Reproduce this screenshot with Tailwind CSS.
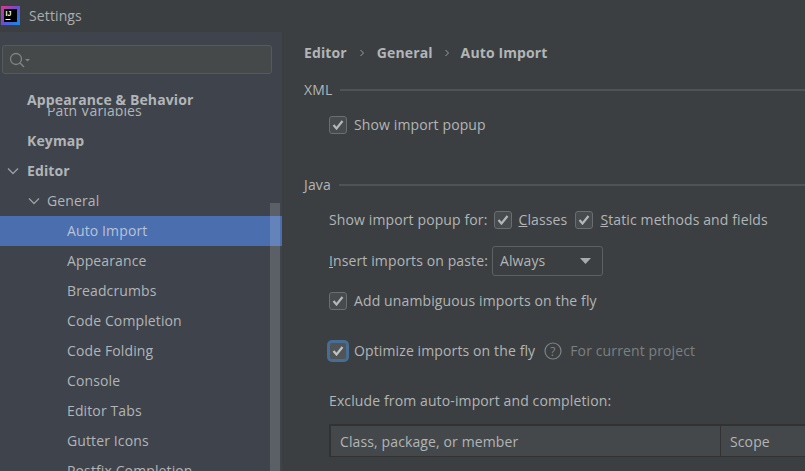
<!DOCTYPE html>
<html lang="en">
<head>
  <meta charset="UTF-8" />
  <title>Settings</title>
  <script src="https://cdn.jsdelivr.net/npm/@tailwindcss/browser@4"></script>
</head>
<body class="w-[805px] h-[471px] overflow-hidden bg-[#3c3f41] text-[#b1b5b7] text-[14px] tracking-[0.12px] font-['Open_Sans',sans-serif]">
  <!-- title bar -->
  <div class="h-[32px] flex items-center">
    <svg width="19" height="19" viewBox="0 0 19 19" class="ml-[1px] mt-[-2px]">
      <defs>
        <linearGradient id="logo" x1="0" y1="0" x2="1" y2="1">
          <stop offset="0" stop-color="#e0338f" />
          <stop offset="0.5" stop-color="#6a4fd0" />
          <stop offset="1" stop-color="#0a8ff0" />
        </linearGradient>
      </defs>
      <rect width="19" height="19" fill="url(#logo)" />
      <rect x="3" y="3" width="13" height="13" fill="#000" />
      <text x="4.500" y="10" font-size="7" font-weight="700" fill="#fff" font-family="'Liberation Sans',sans-serif">IJ</text>
      <path d="M4.500 13.500h5" stroke="#fff" stroke-width="1" />
    </svg>
    <span class="ml-[9px] mt-[-1px] text-[#a9adaf]">Settings</span>
  </div>

  <div class="flex h-[439px]">
    <!-- sidebar -->
    <aside class="w-[282px] shrink-0 bg-[#3f434c] flex flex-col">
      <div class="h-[53px] pl-[2px] pt-[13px]">
        <div class="w-[270px] h-[29px] bg-[#45494a] border border-[#575a5c] rounded-[3px] flex items-center pl-[5px]">
          <svg width="22" height="18" viewBox="0 0 22 18" fill="none">
            <circle cx="8" cy="8" r="5.500" stroke="#7f8487" stroke-width="1.300" />
            <path d="M12 12l4 4" stroke="#7f8487" stroke-width="1.500" />
            <path d="M17 8h5l-2.500 2.500z" fill="#7f8487" />
          </svg>
        </div>
      </div>
      <div class="relative flex-1 overflow-hidden">
        <div class="absolute top-0 left-0 w-full h-[23px] z-10 bg-[#3f434c] pl-[27px] font-bold leading-[30px]">Appearance &amp; Behavior</div>
        <div class="absolute right-[2px] top-[118px] bottom-0 w-[10px] z-20 bg-white/15"></div>
        <div class="leading-[30px] mt-[11px]">
          <div class="h-[30px] pl-[47px]">Path Variables</div>
          <div class="h-[30px] pl-[27px] font-bold">Keymap</div>
          <div class="h-[30px] pl-[7px] font-bold flex items-center gap-[8px]">
            <svg width="12" height="8" viewBox="0 0 12 8" fill="none"><path d="M1 1.500l5 5 5-5" stroke="#9a9ea1" stroke-width="1.400" /></svg>
            <span>Editor</span>
          </div>
          <div class="h-[30px] pl-[28px] flex items-center gap-[7px]">
            <svg width="12" height="8" viewBox="0 0 12 8" fill="none"><path d="M1 1.500l5 5 5-5" stroke="#9a9ea1" stroke-width="1.400" /></svg>
            <span>General</span>
          </div>
          <div class="h-[30px] pl-[67px] bg-[#4b6eaf] text-[#b7c3d6]">Auto Import</div>
          <div class="h-[30px] pl-[67px]">Appearance</div>
          <div class="h-[30px] pl-[67px]">Breadcrumbs</div>
          <div class="h-[30px] pl-[67px]">Code Completion</div>
          <div class="h-[30px] pl-[67px]">Code Folding</div>
          <div class="h-[30px] pl-[67px]">Console</div>
          <div class="h-[30px] pl-[67px]">Editor Tabs</div>
          <div class="h-[30px] pl-[67px]">Gutter Icons</div>
          <div class="h-[30px] pl-[67px]">Postfix Completion</div>
        </div>
      </div>
    </aside>

    <!-- main panel -->
    <main class="flex-1 min-w-0 overflow-hidden pl-[22px] leading-[20px]">
      <div class="flex items-center h-[20px] mt-[11px] font-bold">
        <span>Editor</span>
        <svg width="6" height="8" viewBox="0 0 6 8" fill="none" class="mx-[12px]"><path d="M1.500 1l3 3-3 3" stroke="#9a9ea1" /></svg>
        <span>General</span>
        <svg width="6" height="8" viewBox="0 0 6 8" fill="none" class="mx-[11px]"><path d="M1.500 1l3 3-3 3" stroke="#9a9ea1" /></svg>
        <span>Auto Import</span>
      </div>

      <div class="flex items-center gap-[8px] mt-[17px]">
        <span>XML</span><div class="flex-1 h-[2px] bg-[#505254]"></div>
      </div>
      <label class="flex items-center gap-[7px] ml-[25px] mt-[15px]">
        <span class="w-[18px] h-[18px] rounded-[3px] border border-[#6b6e70] bg-[#474b4d] flex items-center justify-center">
          <svg width="12" height="10" viewBox="0 0 12 10" fill="none"><path d="M1.500 5l3 3.500 6-7.500" stroke="#b4b7b9" stroke-width="2.200" /></svg>
        </span>
        <span>Show import popup</span>
      </label>

      <div class="flex items-center gap-[8px] mt-[40px]">
        <span>Java</span><div class="flex-1 h-[2px] bg-[#505254]"></div>
      </div>
      <div class="flex items-center ml-[25px] mt-[15px]">
        <span>Show import popup for:</span>
        <span class="ml-[6px] w-[18px] h-[18px] rounded-[3px] border border-[#6b6e70] bg-[#474b4d] flex items-center justify-center">
          <svg width="12" height="10" viewBox="0 0 12 10" fill="none"><path d="M1.500 5l3 3.500 6-7.500" stroke="#b4b7b9" stroke-width="2.200" /></svg>
        </span>
        <span class="ml-[7px]"><span class="underline">C</span>lasses</span>
        <span class="ml-[8px] w-[18px] h-[18px] rounded-[3px] border border-[#6b6e70] bg-[#474b4d] flex items-center justify-center">
          <svg width="12" height="10" viewBox="0 0 12 10" fill="none"><path d="M1.500 5l3 3.500 6-7.500" stroke="#b4b7b9" stroke-width="2.200" /></svg>
        </span>
        <span class="ml-[7px]"><span class="underline">S</span>tatic methods and fields</span>
      </div>
      <div class="flex items-center ml-[25px] mt-[16px]">
        <span><span class="underline">I</span>nsert imports on paste:</span>
        <div class="ml-[4px] w-[111px] h-[30px] rounded-[3px] border border-[#5e6163] flex items-center justify-between pl-[7px] pr-[11px]">
          <span>Always</span>
          <svg width="11" height="6" viewBox="0 0 11 6"><path d="M0 0h11l-5.500 6z" fill="#a7abad" /></svg>
        </div>
      </div>
      <label class="flex items-center gap-[7px] ml-[25px] mt-[15px]">
        <span class="w-[18px] h-[18px] rounded-[3px] border border-[#6b6e70] bg-[#474b4d] flex items-center justify-center">
          <svg width="12" height="10" viewBox="0 0 12 10" fill="none"><path d="M1.500 5l3 3.500 6-7.500" stroke="#b4b7b9" stroke-width="2.200" /></svg>
        </span>
        <span>Add unambiguous imports on the fly</span>
      </label>
      <div class="flex items-center ml-[25px] mt-[30px]">
        <span class="w-[18px] h-[18px] rounded-[3px] border border-[#466d94] bg-[#505456] ring-2 ring-[#466d94] flex items-center justify-center">
          <svg width="12" height="10" viewBox="0 0 12 10" fill="none"><path d="M1.500 5l3 3.500 6-7.500" stroke="#bfc2c4" stroke-width="2.200" /></svg>
        </span>
        <span class="ml-[7px]">Optimize imports on the fly</span>
        <svg width="18" height="18" viewBox="0 0 18 18" fill="none" class="ml-[9px]">
          <circle cx="9" cy="9" r="8" stroke="#7f8386" stroke-width="1.200" />
          <text x="9" y="13.500" text-anchor="middle" font-size="12" fill="#7f8386">?</text>
        </svg>
        <span class="ml-[8px] text-[#7b7f82]">For current project</span>
      </div>
      <div class="ml-[25px] mt-[30px]">Exclude from auto-import and completion:</div>

      <div class="ml-[25px] mt-[13px] w-[600px] border-t-2 border-l-2 border-[#323232]">
        <div class="flex h-[31px] bg-[#45484a] border-b border-[#323232] leading-[31px]">
          <div class="w-[390px] pl-[9px] border-r border-[#323232]">Class, package, or member</div>
          <div class="pl-[9px]">Scope</div>
        </div>
      </div>
    </main>
  </div>
</body>
</html>
